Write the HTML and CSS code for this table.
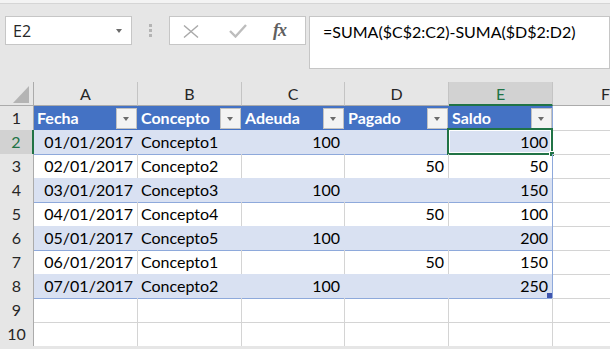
FILE: index.html
```html
<!DOCTYPE html>
<html lang="es">
<head>
    <meta charset="UTF-8">
    <meta name="viewport" content="width=device-width, initial-scale=1.0">
    <title>Libro1 - Saldo</title>
    <link rel="stylesheet" href="styles.css">
</head>
<body>
    <div class="strip"></div>

    <!-- Name box + formula bar -->
    <div class="formula-row">
        <div class="name-box">
            <span>E2</span>
            <span class="drop"></span>
        </div>
        <div class="grip"><span></span><span></span><span></span></div>
        <div class="fx-box">
            <svg class="icon-x" width="16" height="13" viewBox="0 0 16 13">
                <path d="M1 0.5 L15 12.5 M15 0.5 L1 12.5" stroke="#a9a9a9" stroke-width="1.4" fill="none"/>
            </svg>
            <svg class="icon-ok" width="18" height="14" viewBox="0 0 18 14">
                <path d="M1 7 L6.5 12.5 L17 1" stroke="#bdbdbd" stroke-width="2.4" fill="none"/>
            </svg>
            <span class="fx">fx</span>
        </div>
        <div class="formula">=SUMA($C$2:C2)-SUMA($D$2:D2)</div>
    </div>

    <!-- Worksheet -->
    <div class="sheet">
        <div class="row col-heads">
            <div class="corner"><span class="corner-tri"></span></div>
            <div class="ch">A</div>
            <div class="ch">B</div>
            <div class="ch">C</div>
            <div class="ch">D</div>
            <div class="ch sel">E</div>
            <div class="ch">F</div>
        </div>

        <div class="row">
            <div class="rh">1</div>
            <div class="cell tc th"><span>Fecha</span><span class="filter"></span></div>
            <div class="cell tc th"><span>Concepto</span><span class="filter"></span></div>
            <div class="cell tc th"><span>Adeuda</span><span class="filter"></span></div>
            <div class="cell tc th"><span>Pagado</span><span class="filter"></span></div>
            <div class="cell tc th end"><span>Saldo</span><span class="filter"></span></div>
            <div class="cell"></div>
        </div>

        <div class="row band">
            <div class="rh sel">2</div>
            <div class="cell tc num">01/01/2017</div>
            <div class="cell tc">Concepto1</div>
            <div class="cell tc num">100</div>
            <div class="cell tc num"></div>
            <div class="cell tc num end">100<span class="active"><span class="handle"></span></span></div>
            <div class="cell"></div>
        </div>

        <div class="row">
            <div class="rh">3</div>
            <div class="cell tc num">02/01/2017</div>
            <div class="cell tc">Concepto2</div>
            <div class="cell tc num"></div>
            <div class="cell tc num">50</div>
            <div class="cell tc num end">50</div>
            <div class="cell"></div>
        </div>

        <div class="row band">
            <div class="rh">4</div>
            <div class="cell tc num">03/01/2017</div>
            <div class="cell tc">Concepto3</div>
            <div class="cell tc num">100</div>
            <div class="cell tc num"></div>
            <div class="cell tc num end">150</div>
            <div class="cell"></div>
        </div>

        <div class="row">
            <div class="rh">5</div>
            <div class="cell tc num">04/01/2017</div>
            <div class="cell tc">Concepto4</div>
            <div class="cell tc num"></div>
            <div class="cell tc num">50</div>
            <div class="cell tc num end">100</div>
            <div class="cell"></div>
        </div>

        <div class="row band">
            <div class="rh">6</div>
            <div class="cell tc num">05/01/2017</div>
            <div class="cell tc">Concepto5</div>
            <div class="cell tc num">100</div>
            <div class="cell tc num"></div>
            <div class="cell tc num end">200</div>
            <div class="cell"></div>
        </div>

        <div class="row">
            <div class="rh">7</div>
            <div class="cell tc num">06/01/2017</div>
            <div class="cell tc">Concepto1</div>
            <div class="cell tc num"></div>
            <div class="cell tc num">50</div>
            <div class="cell tc num end">150</div>
            <div class="cell"></div>
        </div>

        <div class="row band">
            <div class="rh">8</div>
            <div class="cell tc num">07/01/2017</div>
            <div class="cell tc">Concepto2</div>
            <div class="cell tc num">100</div>
            <div class="cell tc num"></div>
            <div class="cell tc num end">250<span class="resize"></span></div>
            <div class="cell"></div>
        </div>

        <div class="row">
            <div class="rh">9</div>
            <div class="cell"></div>
            <div class="cell"></div>
            <div class="cell"></div>
            <div class="cell"></div>
            <div class="cell"></div>
            <div class="cell"></div>
        </div>

        <div class="row">
            <div class="rh">10</div>
            <div class="cell"></div>
            <div class="cell"></div>
            <div class="cell"></div>
            <div class="cell"></div>
            <div class="cell"></div>
            <div class="cell"></div>
        </div>
    </div>
</body>
</html>
```

FILE: styles.css
```css
* {
    box-sizing: border-box;
}
body {
    margin: 0;
    width: 610px;
    height: 349px;
    overflow: hidden;
    background-color: #e6e6e6;
    font-family: Lato, "Open Sans", sans-serif;
    color: #000;
}
.strip {
    height: 4px;
    background-color: #f3f3f3;
    border-bottom: 1px solid #d5d5d5;
}

/* Name box and formula bar */
.formula-row {
    display: flex;
    align-items: flex-start;
    height: 78px;
    padding: 12px 0 0 5px;
}
.name-box {
    width: 127px;
    height: 29px;
    background-color: #fff;
    border: 1px solid #c6c6c6;
    display: flex;
    align-items: center;
    justify-content: space-between;
    padding: 0 9px 0 7px;
    font-family: "Open Sans", sans-serif;
    font-size: 16px;
    color: #262626;
}
.drop {
    width: 0;
    height: 0;
    border-left: 3.5px solid transparent;
    border-right: 3.5px solid transparent;
    border-top: 4px solid #6b6b6b;
}
.grip {
    display: flex;
    flex-direction: column;
    gap: 2px;
    margin: 8px 0 0 17px;
}
.grip span {
    width: 3px;
    height: 3px;
    background-color: #b4b4b4;
}
.fx-box {
    width: 137px;
    height: 29px;
    margin-left: 17px;
    background-color: #fff;
    border: 1px solid #c6c6c6;
    display: flex;
    align-items: center;
    padding-left: 13px;
}
.icon-x {
    margin-top: 1px;
}
.icon-ok {
    margin-left: 30px;
}
.fx {
    margin-left: 26px;
    font-family: "Liberation Serif", serif;
    font-style: italic;
    font-weight: bold;
    font-size: 18px;
    color: #606060;
    letter-spacing: -1px;
}
.formula {
    flex: 1;
    height: 53px;
    margin-left: 3px;
    background-color: #fff;
    border: 1px solid #c6c6c6;
    padding: 5px 0 0 13px;
    font-size: 16px;
    line-height: 20px;
    white-space: nowrap;
}

/* Worksheet grid */
.sheet {
    background-color: #fff;
    overflow: hidden;
}
.row {
    display: grid;
    grid-template-columns: 34px 104px 104px 103px 104px 104px 57px;
    height: 24px;
}
.cell {
    position: relative;
    border-right: 1px solid #d4d4d4;
    border-bottom: 1px solid #d4d4d4;
    padding: 0 4px 0 3px;
    font-size: 16px;
    line-height: 24px;
    white-space: nowrap;
}
.row > :last-child {
    border-right: none;
}
.num {
    text-align: right;
}

/* Column and row headings */
.col-heads .ch,
.corner,
.rh {
    background-color: #e6e6e6;
    color: #262626;
    font-size: 16px;
    text-align: center;
}
.col-heads {
    height: 24px;
}
.ch {
    border-right: 1px solid #c4c4c4;
    border-bottom: 1px solid #ababab;
    line-height: 23px;
    overflow: hidden;
}
/* F column is cut by the window edge, so its letter sits at the full column's centre */
.col-heads .ch:last-child {
    text-align: left;
    padding-left: 48px;
}
.ch.sel {
    background-color: #d2d2d2;
    color: #217346;
    border-bottom: 2px solid #217346;
}
.corner {
    position: relative;
    border-right: 1px solid #ababab;
    border-bottom: 1px solid #ababab;
}
.corner-tri {
    position: absolute;
    right: 4px;
    bottom: 2px;
    width: 16px;
    height: 17px;
    background-color: #b4b4b4;
    clip-path: polygon(100% 0, 100% 100%, 0 100%);
}
.rh {
    border-right: 1px solid #ababab;
    border-bottom: 1px solid #d0d0d0;
    line-height: 24px;
}
.rh.sel {
    background-color: #d2d2d2;
    color: #217346;
    border-right: 2px solid #217346;
}

/* Formatted table */
.tc {
    border-bottom-color: #8ea9db;
}
.band .tc {
    background-color: #d9e1f2;
    border-right-color: #d9e1f2;
}
.tc.end {
    border-right-color: #8ea9db;
}
.th {
    display: flex;
    align-items: center;
    justify-content: space-between;
    padding-right: 0;
    background-color: #4472c4;
    border-right-color: #4472c4;
    border-bottom-color: #4472c4;
    color: #fff;
    font-weight: bold;
}
.th.end {
    border-right-color: #8ea9db;
}
.filter {
    position: relative;
    width: 21px;
    height: 21px;
    background-color: #f3f3f3;
    border: 1px solid #c2c2c2;
}
.filter::after {
    content: "";
    position: absolute;
    left: 6px;
    top: 8px;
    border-left: 3.5px solid transparent;
    border-right: 3.5px solid transparent;
    border-top: 4px solid #6b6b6b;
}

/* Active cell and table corner */
.active {
    position: absolute;
    left: -2px;
    top: -2px;
    right: -1px;
    bottom: -1px;
    border: 2px solid #217346;
    box-shadow: inset 0 0 0 1px #fff;
}
.handle {
    position: absolute;
    right: -4px;
    bottom: -4px;
    width: 6px;
    height: 6px;
    background-color: #217346;
    border: 1px solid #fff;
}
.resize {
    position: absolute;
    right: 0;
    bottom: 0;
    width: 5px;
    height: 5px;
    background-color: #3f55ae;
}
```
